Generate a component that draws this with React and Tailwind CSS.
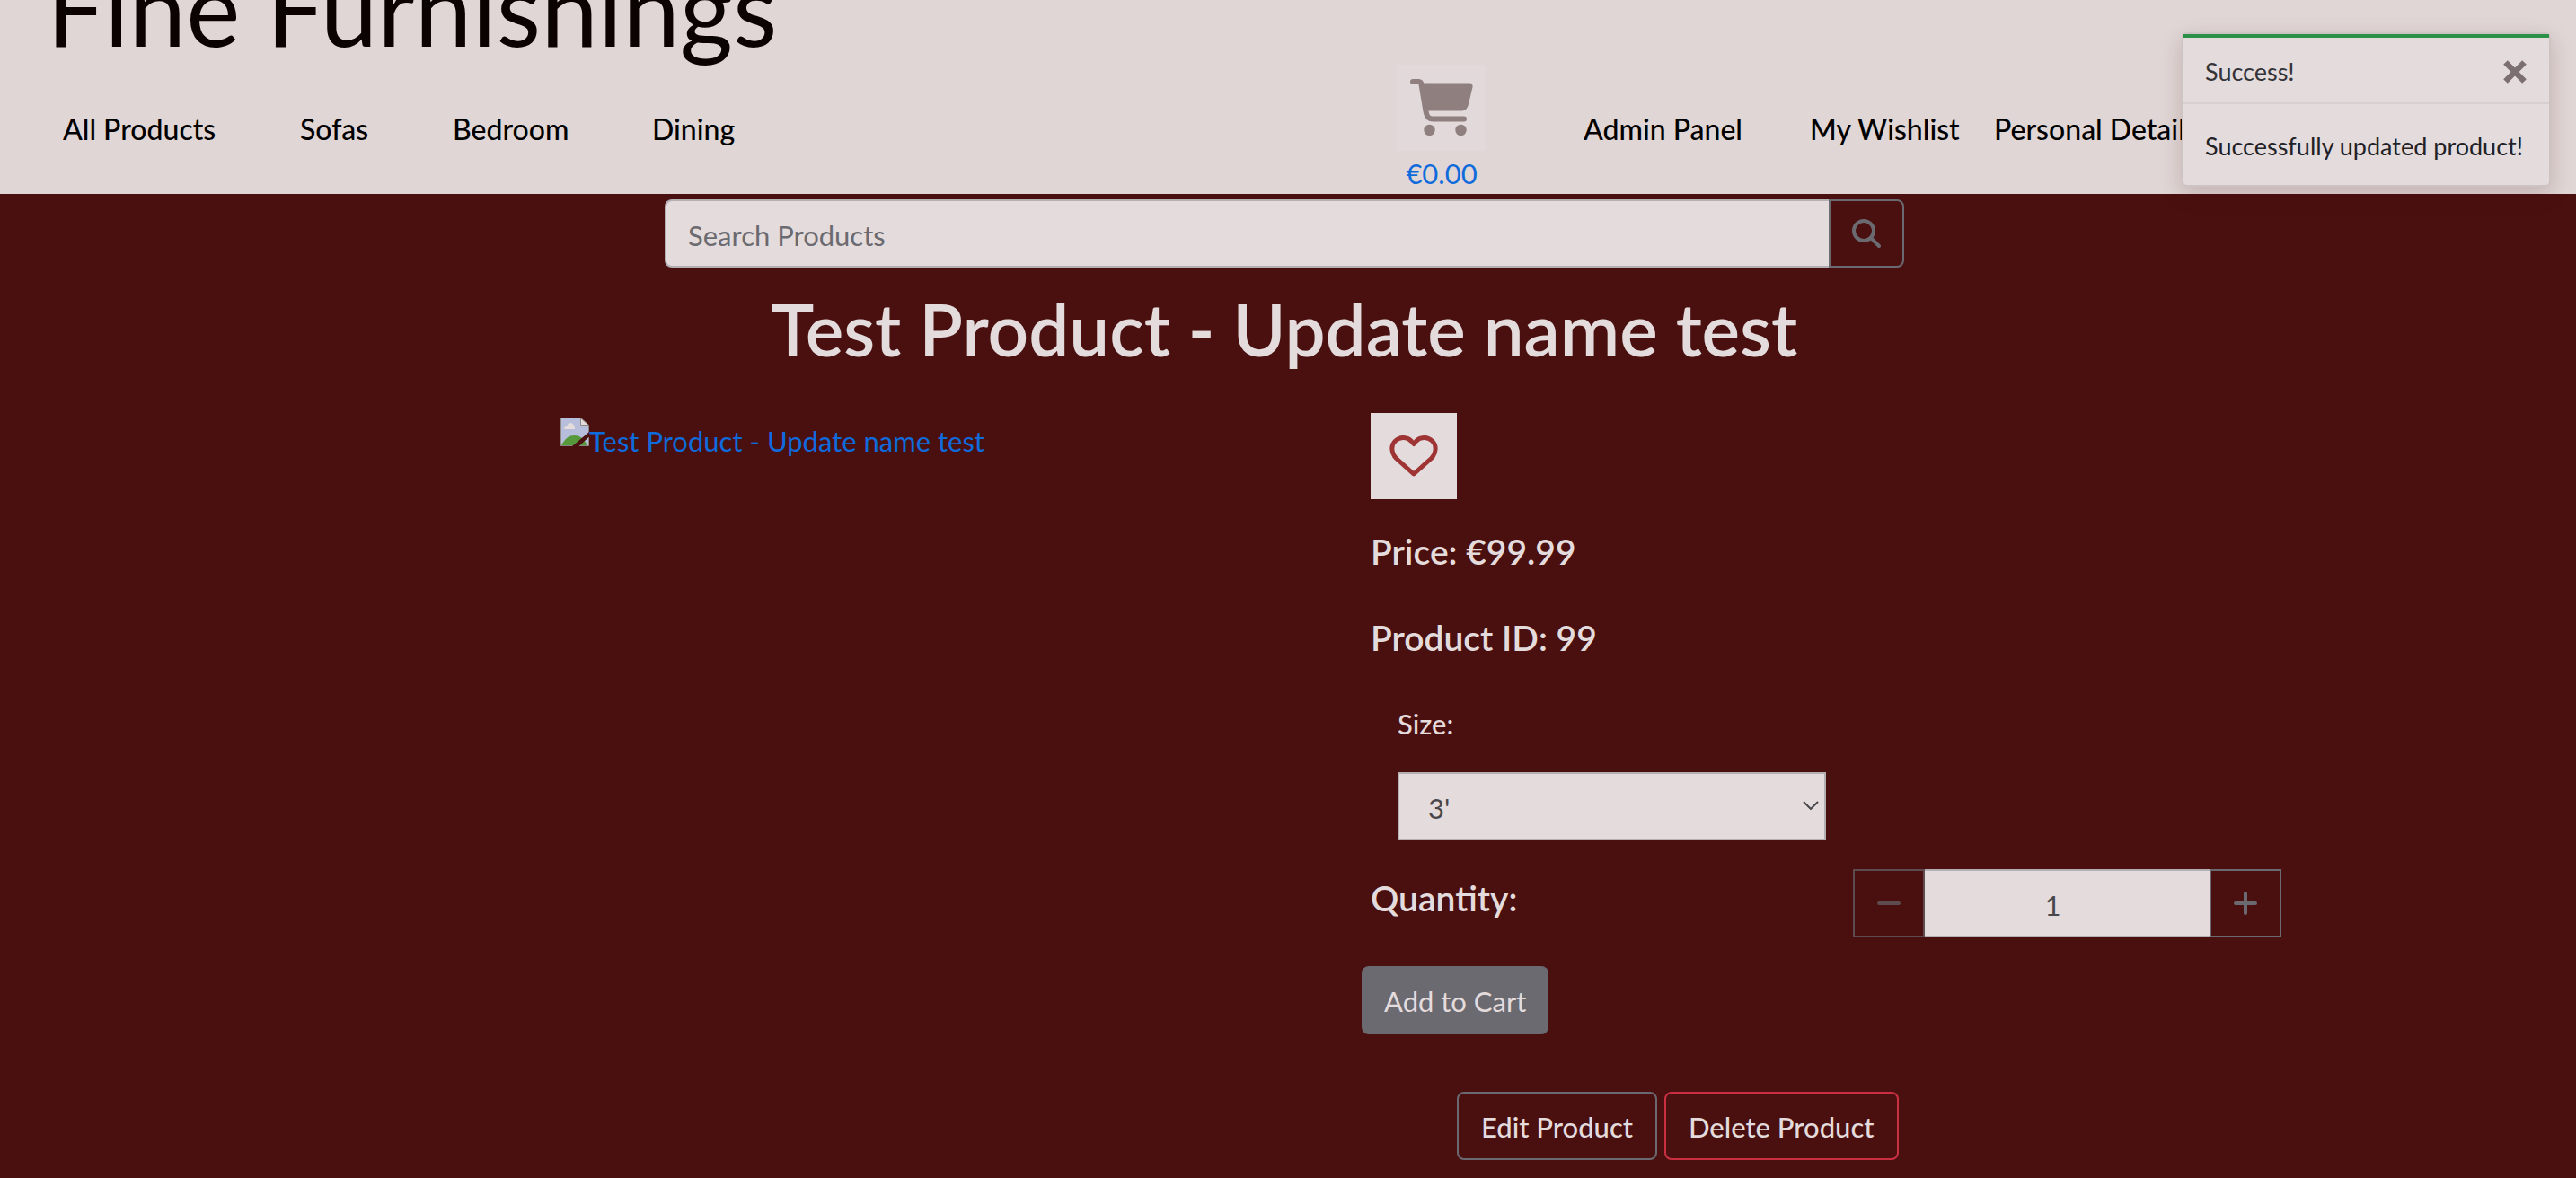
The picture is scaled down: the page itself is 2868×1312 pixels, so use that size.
import React from "react";

const navLink = "whitespace-nowrap text-black";

function CartIcon() {
  return (
    <svg viewBox="0 0 96 96" className="size-24" fill="#8f7f7f" stroke="#8f7f7f" strokeLinecap="round" strokeLinejoin="round" aria-hidden="true">
      <path d="M25 20.500H79C81.500 20.500 83 22.500 82.500 25L78 44C77 49 74 51.500 70 51.500H31Z" stroke="none" />
      <path d="M16 19H22.500C24.500 19 25.300 20.500 25.600 22.500L30.500 52C31.500 58 33.500 60.500 38 60.500H73" fill="none" strokeWidth="6" />
      <circle cx="34.500" cy="73" r="6.200" stroke="none" />
      <circle cx="69.500" cy="73" r="6.200" stroke="none" />
    </svg>
  );
}

function HeartIcon() {
  return (
    <svg viewBox="0 0 54 46" className="w-[54px] h-[46px]" fill="none" stroke="#9e3434" strokeWidth="5" strokeLinejoin="round" aria-hidden="true">
      <path d="M27 43 L7.500 25.500 C1.500 19.500 1.500 10.500 6.500 6 C12 1 20 1.500 24.500 6.500 L27 9.500 L29.500 6.500 C34 1.500 42 1 47.500 6 C52.500 10.500 52.500 19.500 46.500 25.500 Z" />
    </svg>
  );
}

function BrokenImageIcon() {
  return (
    <svg viewBox="0 0 32 32" className="size-8 shrink-0" aria-hidden="true">
      <path d="M0.500 0.500H22.500L31.500 9V31.500H0.500Z" fill="#b6bedb" stroke="#8f8782" />
      <path d="M4 13c0-2 1-3 3-3 1-3 2-4 4-4s4 1 4 4c1 0 1 1 1 3z" fill="#e4dbdc" />
      <path d="M1 31C5 23 10 20 15.500 20S26 23 30 31z" fill="#56993a" />
      <path d="M22.500 0.500V8.500H31.500Z" fill="#e4dbdc" stroke="#8f8782" />
      <path d="M13 32L32 16V21.500L20.500 32Z" fill="#4a1010" />
    </svg>
  );
}

function SearchIcon() {
  return (
    <svg viewBox="0 0 32 32" className="size-8" fill="none" stroke="#6a6a70" strokeWidth="4" strokeLinecap="round" aria-hidden="true">
      <circle cx="13" cy="13" r="11" />
      <path d="M21.500 21.500L30 30" />
    </svg>
  );
}

function Header() {
  return (
    <header className="h-[216px] overflow-hidden bg-[#e0d6d5] font-medium">
      <a href="#home" className="-mt-[56px] block pl-[52px] text-[114px] leading-[128px] font-normal text-[#0b0202]">
        Fine Furnishings
      </a>
      <nav className="flex items-start pl-[70px] text-[32px]">
        <div className="flex w-[1487px] pt-12 leading-12">
          <a href="#all" className={navLink + " w-[264px]"}>All Products</a>
          <a href="#sofas" className={navLink + " w-[170px]"}>Sofas</a>
          <a href="#bedroom" className={navLink + " w-[222px]"}>Bedroom</a>
          <a href="#dining" className={navLink}>Dining</a>
        </div>
        <a href="#cart" className="flex w-24 flex-col items-center text-[31px] font-normal text-[#0f6bdc]">
          <span className="size-24 bg-[#e2d9da]">
            <CartIcon />
          </span>
          <span className="pt-px leading-12">€0.00</span>
        </a>
        <div className="flex pl-[110px] pt-12 leading-12">
          <a href="#admin" className={navLink + " w-[252px]"}>Admin Panel</a>
          <a href="#wishlist" className={navLink + " w-[205px]"}>My Wishlist</a>
          <a href="#details" className={navLink}>Personal Details</a>
        </div>
      </nav>
    </header>
  );
}

function Toast() {
  return (
    <div role="status" className="absolute top-[36px] right-[28px] w-[411px] rounded-md border-2 border-[#cdc3c3] bg-[#e4dbdc] text-[27px] shadow-[0_8px_24px_rgba(60,10,10,0.18)]">
      <div className="flex h-[78px] items-center justify-between border-t-4 border-b-2 border-t-[#2b9148] border-b-[#d8cfcf] pt-1 pr-[25px] pl-6 text-[#343438]">
        <span>Success!</span>
        <button type="button" aria-label="Close">
          <svg viewBox="0 0 26 26" className="size-[26px]" stroke="#7b6f70" strokeWidth="6.500" aria-hidden="true">
            <path d="M2.500 2.500L23.500 23.500M23.500 2.500L2.500 23.500" />
          </svg>
        </button>
      </div>
      <div className="px-6 pt-[26px] pb-[22px] leading-[42px] whitespace-nowrap text-[#222126]">Successfully updated product!</div>
    </div>
  );
}

export default function App() {
  return (
    <div className="relative min-h-screen overflow-x-hidden bg-[#4a1010] font-['Lato',sans-serif] text-[31px] text-[#e4dbdc]">
      <Header />
      <Toast />
      <main className="pr-2">
        <form role="search" className="mx-auto mt-[6px] flex h-[76px] w-full max-w-[1380px]">
          <input
            type="search"
            aria-label="Search Products"
            placeholder="Search Products"
            className="min-w-0 flex-1 rounded-l-lg border-2 border-r-0 border-[#b3afb3] bg-[#e4dbdc] px-6 pt-1 text-[#48484c] outline-none placeholder:text-[#6a6a70] placeholder:opacity-100"
          />
          <button type="button" aria-label="Search" className="flex w-[84px] items-center justify-center rounded-r-lg border-2 border-[#6a6a70]">
            <SearchIcon />
          </button>
        </form>

        <h1 className="mt-5 text-center text-[80px] leading-[96px] font-semibold">Test Product - Update name test</h1>

        <div className="mx-auto mt-[46px] grid w-full max-w-[2280px] grid-cols-2">
          <div className="flex justify-center pt-[5px]">
            <a href="#image" className="flex items-start text-[#0f6bdc]">
              <BrokenImageIcon />
              <span className="pt-0.5 leading-12">Test Product - Update name test</span>
            </a>
          </div>

          <div className="pl-24">
            <button type="button" aria-label="Add to wishlist" className="flex size-24 items-center justify-center bg-[#e4dbdc]">
              <HeartIcon />
            </button>
            <p className="mt-[34px] text-[39px] leading-12 font-semibold">Price: €99.99</p>
            <p className="mt-12 text-[39px] leading-12 font-semibold">Product ID: 99</p>

            <div className="mt-12 flex flex-col pl-[30px]">
              <label htmlFor="size" className="leading-12 font-medium">Size:</label>
              <div className="relative mt-[30px] w-[477px]">
                <select id="size" defaultValue="3" className="h-[76px] w-full appearance-none border-2 border-[#b3afb3] bg-[#e4dbdc] pt-1 pl-8 text-[#48484c]">
                  <option value="3">3'</option>
                </select>
                <svg viewBox="0 0 18 10" className="pointer-events-none absolute top-8 right-2 h-2.5 w-[18px]" fill="none" stroke="#48484c" strokeWidth="2" aria-hidden="true">
                  <path d="M1 1L9 9L17 1" />
                </svg>
              </div>
            </div>

            <div className="mt-8 flex items-start justify-between pr-[30px]">
              <label htmlFor="quantity" className="mt-2 text-[39px] leading-12 font-semibold">Quantity:</label>
              <div className="flex h-[76px] w-[477px]">
                <button type="button" disabled aria-label="Decrease quantity" className="flex w-20 items-center justify-center border-2 border-[#5e4b4f] text-[#5e4b4f]">
                  <svg viewBox="0 0 26 26" className="size-[26px]" stroke="currentColor" strokeWidth="4" strokeLinecap="round" aria-hidden="true">
                    <path d="M2 13H24" />
                  </svg>
                </button>
                <input id="quantity" type="text" inputMode="numeric" defaultValue="1" className="min-w-0 flex-1 border-y-2 border-[#b3afb3] bg-[#e4dbdc] pt-1 pr-8 text-center text-[#48484c]" />
                <button type="button" aria-label="Increase quantity" className="flex w-20 items-center justify-center border-2 border-[#6a6a70] text-[#6a6a70]">
                  <svg viewBox="0 0 26 26" className="size-[26px]" stroke="currentColor" strokeWidth="4" strokeLinecap="round" aria-hidden="true">
                    <path d="M2 13H24M13 2V24" />
                  </svg>
                </button>
              </div>
            </div>

            <button type="button" className="mt-8 -ml-2.5 flex h-[76px] items-center rounded-lg bg-[#6a6a70] px-[25px] pt-0.5">Add to Cart</button>

            <div className="mt-16 mb-5 flex gap-2 pl-24">
              <a href="#edit" className="flex h-[76px] items-center rounded-lg border-2 border-[#6a6a70] px-[25px] pt-0.5 font-medium">Edit Product</a>
              <a href="#delete" className="flex h-[76px] items-center rounded-lg border-2 border-[#cb3042] px-[25px] pt-0.5 font-medium">Delete Product</a>
            </div>
          </div>
        </div>
      </main>
    </div>
  );
}
